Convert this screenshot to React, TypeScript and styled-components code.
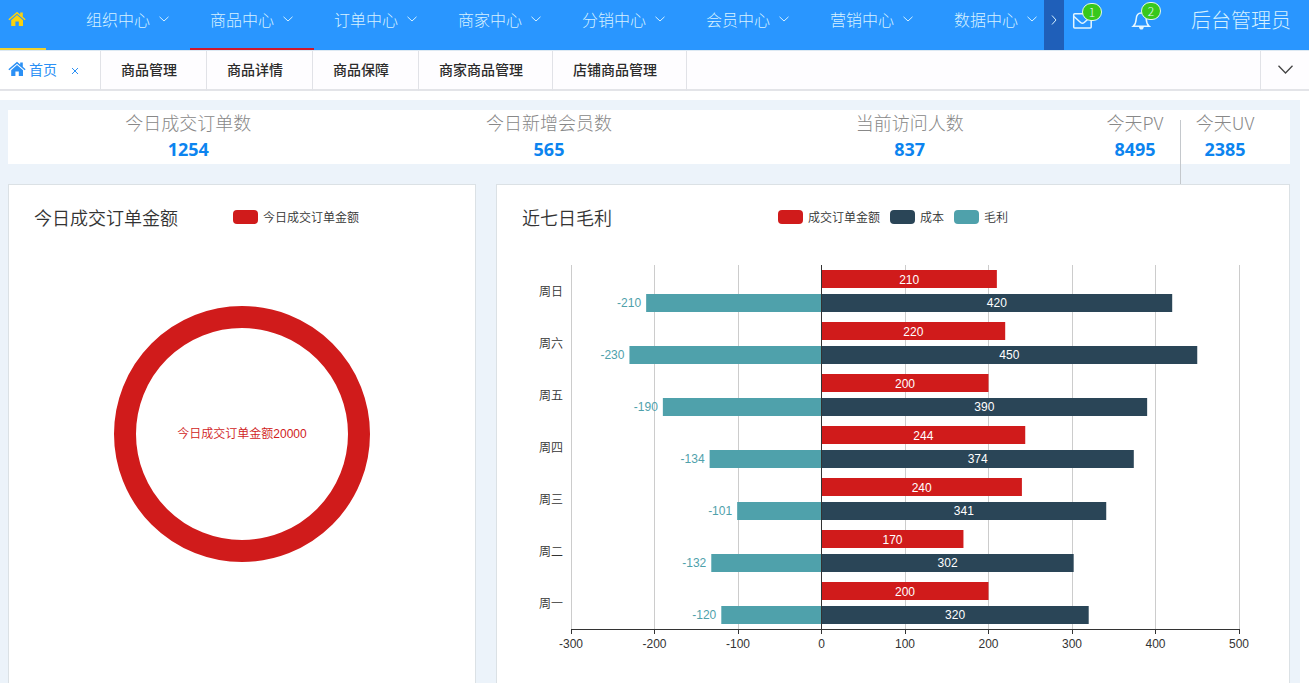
import React from 'react';
import styled, { createGlobalStyle } from 'styled-components';

const cjk = `'Noto Sans CJK SC', sans-serif`;
const chartFont = `'Liberation Sans', 'Noto Sans CJK SC', sans-serif`;

const RED = '#d01b1b';
const NAVY = '#2a4557';
const TEAL = '#4fa1ab';

const GlobalStyle = createGlobalStyle`
  * { box-sizing: border-box; }
  body { margin: 0; background: #fff; font-family: ${cjk}; }
  button { border: 0; padding: 0; background: none; font: inherit; cursor: pointer; }
  a { color: inherit; text-decoration: none; }
  svg { display: block; flex: none; }
`;

const Page = styled.div`
  display: flex;
  flex-direction: column;
  min-height: 100vh;
`;

const Header = styled.header`
  display: flex;
  height: 50px;
  background: #2996ff;
  color: #d6f1ff;
`;

const Nav = styled.nav`
  display: flex;
  flex: 1;
  gap: 20px;
  min-width: 0;
  overflow: hidden;
`;

const HomeLink = styled.a`
  flex: none;
  width: 46px;
  padding: 11px 8px 0;
  border-bottom: 2px solid #f0d02c;
  color: #fbd20d;
`;

const MenuList = styled.div`
  display: flex;
`;

const MenuItem = styled.a<{ $current?: boolean }>`
  display: flex;
  align-items: center;
  gap: 9px;
  flex: none;
  width: 124px;
  padding: 0 20px 10px;
  border-bottom: 2px solid ${(p) => (p.$current ? '#d0182c' : 'transparent')};
  font-size: 16px;
  font-weight: 300;
  white-space: nowrap;
`;

const MoreButton = styled.button`
  display: flex;
  justify-content: center;
  flex: none;
  width: 20px;
  padding-top: 14px;
  background: #1f5fb9;
  color: inherit;
`;

const Tools = styled.div`
  display: flex;
  flex: none;
  align-items: center;
  width: 245px;
  padding: 0 18px 10px 8px;
`;

const ToolButton = styled.button`
  position: relative;
  display: flex;
  flex: none;
  width: 59px;
  color: #e4f6ff;
`;

const Badge = styled.span`
  position: absolute;
  top: -8px;
  left: 10px;
  width: 20px;
  height: 18px;
  border: 1px solid #e6fbe9;
  border-radius: 10px;
  background: #38c81c;
  font-size: 12px;
  font-weight: 300;
  line-height: 16px;
  text-align: center;
`;

const UserName = styled.a`
  margin-left: auto;
  font-size: 20px;
  font-weight: 300;
  line-height: 38px;
  white-space: nowrap;
`;

const TabBar = styled.div`
  display: flex;
  height: 41px;
  border-top: 1px solid #dde9f3;
  background: #fefdff;
  box-shadow: inset 0 -2px #e3e4e8;
`;

const TabLink = styled.a`
  flex: none;
  padding: 0 29px 0 20px;
  border-right: 1px solid #e1e2e7;
  color: #2b2b2b;
  font-size: 14px;
  font-weight: 500;
  line-height: 36px;
`;

const ActiveTab = styled.div`
  display: flex;
  align-items: center;
  flex: none;
  width: 101px;
  height: 39px;
  padding: 0 19px 2px 8px;
  border-right: 1px solid #e1e2e7;
  border-bottom: 1px solid #e1e2e7;
  background: #fff;
  color: #2b90f5;
  font-size: 14px;
`;

const ActiveTabLink = styled.a`
  display: flex;
  align-items: center;
  gap: 3px;
`;

const CloseButton = styled.button`
  margin: 4px 0 0 auto;
  padding: 2px;
  color: #2b90f5;
`;

const TabsMenu = styled.button`
  display: flex;
  justify-content: center;
  align-items: center;
  flex: none;
  width: 49px;
  margin-left: auto;
  padding-bottom: 4px;
  border-left: 1px solid #e1e2e7;
  color: #444;
`;

const Main = styled.main`
  display: flex;
  flex: 1;
  flex-direction: column;
  gap: 20px;
  margin: 9px 9px 0 0;
  padding: 10px 10px 0 8px;
  background: #ecf3fa;
`;

const Stats = styled.section`
  display: flex;
  height: 54px;
  padding-right: 20px;
  background: #fff;
`;

const Stat = styled.div<{ $narrow?: boolean }>`
  position: relative;
  flex: ${(p) => (p.$narrow ? '0 0 90px' : '1 1 0')};
  text-align: center;
  white-space: nowrap;
`;

const StatDivider = styled.span`
  position: absolute;
  top: 10px;
  right: -1px;
  width: 1px;
  height: 64px;
  background: #c4c8cc;
`;

const StatLabel = styled.div`
  color: #888;
  font-size: 18px;
  font-weight: 300;
  line-height: 24px;
`;

const StatValue = styled.div`
  color: #0c84ef;
  font-family: 'Noto Sans', sans-serif;
  font-size: 18px;
  font-weight: 700;
  line-height: 30px;
`;

const Cards = styled.div`
  display: grid;
  flex: 1;
  grid-template-columns: 468fr 794fr;
  gap: 20px;
`;

const Card = styled.section`
  min-width: 0;
  padding: 20px 25px 0;
  border: 1px solid #dbe1e5;
  border-bottom: 0;
  background: #fff;
`;

const CardHead = styled.div<{ $inline?: boolean }>`
  display: grid;
  grid-template-columns: ${(p) => (p.$inline ? 'auto 1fr' : '1fr auto 1fr')};
  column-gap: ${(p) => (p.$inline ? '55px' : '0')};
  align-items: start;
  height: 60px;
`;

const CardTitle = styled.h2`
  margin: 0;
  color: #333;
  font-size: 18px;
  font-weight: 350;
  line-height: 24px;
  white-space: nowrap;
`;

const Legend = styled.div`
  display: flex;
  gap: 10px;
`;

const LegendItem = styled.span`
  display: flex;
  align-items: center;
  gap: 5px;
  color: #333;
  font-size: 12px;
  font-weight: 350;
  line-height: 24px;
  white-space: nowrap;
`;

const Swatch = styled.i<{ $color: string }>`
  width: 25px;
  height: 14px;
  border-radius: 4px;
  background: ${(p) => p.$color};
`;

const DonutBox = styled.div`
  display: flex;
  justify-content: center;
  padding-top: 41px;
`;

const PlotBox = styled.div`
  margin: 0 25px 0 49px;
`;

const ChartSvg = styled.svg`
  overflow: visible;
  font-family: ${chartFont};
  font-size: 12px;
`;

const ChartLabel = styled.text`
  font-weight: 350;
`;

const HomeIcon = () => (
  <svg width="18" height="16" viewBox="0 0 18 16" fill="currentColor" aria-hidden="true">
    <path d="M9 4 15 9.200V15h-4.200v-4.400H7.400V15H3.200V9.200z" />
    <path d="M.4 8.200 9 .8l3.200 2.700V1.500h2.600v4.200l2.800 2.500-.9 1L9 2.800 1.300 9.200z" />
  </svg>
);

const Chevron = ({ w, h, width = 1 }: { w: number; h: number; width?: number }) => (
  <svg width={w} height={h} viewBox={`0 0 ${w} ${h}`} fill="none" stroke="currentColor" strokeWidth={width} aria-hidden="true">
    <path d={`M.5 .8 ${w / 2} ${h - 1} ${w - 0.5} .8`} />
  </svg>
);

const menus = ['组织中心', '商品中心', '订单中心', '商家中心', '分销中心', '会员中心', '营销中心', '数据中心'];
const tabs = ['商品管理', '商品详情', '商品保障', '商家商品管理', '店铺商品管理'];

const stats = [
  { label: '今日成交订单数', value: 1254 },
  { label: '今日新增会员数', value: 565 },
  { label: '当前访问人数', value: 837 },
  { label: '今天PV', value: 8495, narrow: true, divider: true },
  { label: '今天UV', value: 2385, narrow: true },
];

const days = [
  { name: '周日', amount: 210, cost: 420, profit: -210 },
  { name: '周六', amount: 220, cost: 450, profit: -230 },
  { name: '周五', amount: 200, cost: 390, profit: -190 },
  { name: '周四', amount: 244, cost: 374, profit: -134 },
  { name: '周三', amount: 240, cost: 341, profit: -101 },
  { name: '周二', amount: 170, cost: 302, profit: -132 },
  { name: '周一', amount: 200, cost: 320, profit: -120 },
];

const MIN = -300;
const MAX = 500;
const ROW = 52;
const BAR = 18;
const PLOT_HEIGHT = ROW * days.length;
const ticks = [-300, -200, -100, 0, 100, 200, 300, 400, 500];
const at = (v: number) => `${((v - MIN) / (MAX - MIN)) * 100}%`;
const span = (v: number) => `${(Math.abs(v) / (MAX - MIN)) * 100}%`;

const Donut = () => (
  <ChartSvg width="256" height="256" viewBox="0 0 256 256" role="img" aria-label="今日成交订单金额">
    <circle cx="128" cy="128" r="117" fill="none" stroke={RED} strokeWidth="22" />
    <ChartLabel x="128" y="132" textAnchor="middle" fill={RED}>今日成交订单金额20000</ChartLabel>
  </ChartSvg>
);

const ProfitChart = () => (
  <ChartSvg width="100%" height={PLOT_HEIGHT + 24} role="img" aria-label="近七日毛利">
    {ticks.map((t) => (
      <g key={t}>
        <line x1={at(t)} x2={at(t)} y1="0" y2={PLOT_HEIGHT} stroke="#ccc" shapeRendering="crispEdges" />
        <line x1={at(t)} x2={at(t)} y1={PLOT_HEIGHT} y2={PLOT_HEIGHT + 5} stroke="#333" shapeRendering="crispEdges" />
        <text x={at(t)} y={PLOT_HEIGHT + 19} textAnchor="middle" fill="#333">{t}</text>
      </g>
    ))}
    {days.map((d, i) => {
      const top = i * ROW + 5;
      const low = top + 24;
      return (
        <g key={d.name}>
          <ChartLabel x="0" dx="-8" y={top + 26} textAnchor="end" fill="#333">{d.name}</ChartLabel>
          <rect x={at(0)} y={top} width={span(d.amount)} height={BAR} fill={RED} />
          <rect x={at(0)} y={low} width={span(d.cost)} height={BAR} fill={NAVY} />
          <rect x={at(d.profit)} y={low} width={span(d.profit)} height={BAR} fill={TEAL} />
          <text x={at(d.amount / 2)} y={top + 14} textAnchor="middle" fill="#fff">{d.amount}</text>
          <text x={at(d.cost / 2)} y={low + 13} textAnchor="middle" fill="#fff">{d.cost}</text>
          <text x={at(d.profit)} dx="-5" y={low + 13} textAnchor="end" fill={TEAL}>{d.profit}</text>
        </g>
      );
    })}
    <line x1={at(0)} x2={at(0)} y1="0" y2={PLOT_HEIGHT} stroke="#333" shapeRendering="crispEdges" />
    <line x1="0" x2="100%" y1={PLOT_HEIGHT} y2={PLOT_HEIGHT} stroke="#333" shapeRendering="crispEdges" />
  </ChartSvg>
);

export default function App() {
  return (
    <Page>
      <GlobalStyle />
      <Header>
        <Nav>
          <HomeLink href="#" aria-label="首页"><HomeIcon /></HomeLink>
          <MenuList>
            {menus.map((m) => (
              <MenuItem key={m} href="#" $current={m === '商品中心'}>
                {m}
                <Chevron w={10} h={6} />
              </MenuItem>
            ))}
          </MenuList>
        </Nav>
        <MoreButton aria-label="更多">
          <svg width="6" height="12" viewBox="0 0 6 12" fill="none" stroke="currentColor" aria-hidden="true">
            <path d="M1 1.500 5 6 1 10.500" />
          </svg>
        </MoreButton>
        <Tools>
          <ToolButton aria-label="消息">
            <svg width="20" height="18" viewBox="0 0 20 18" fill="none" stroke="currentColor" strokeWidth="1.500" aria-hidden="true">
              <rect x="1.700" y="2.700" width="17.500" height="14.300" rx="1" />
              <path d="M2 5.500 8.600 11.500c1.100 1 2.500 1 3.600 0L19 5.500" />
            </svg>
            <Badge>1</Badge>
          </ToolButton>
          <ToolButton aria-label="通知">
            <svg width="20" height="20" viewBox="0 0 20 20" fill="none" stroke="currentColor" strokeWidth="1.500" aria-hidden="true">
              <path d="M2.200 16.300c2.200-1.900 2.800-3.600 3-7.300C5.400 5.200 7 3 10.200 3s4.800 2.200 5 6c.2 3.700.8 5.400 3 7.300z" />
              <path d="M8 17h4.800c-.2 1.700-1.100 2.600-2.400 2.600S8.200 18.700 8 17z" fill="currentColor" stroke="none" />
            </svg>
            <Badge>2</Badge>
          </ToolButton>
          <UserName href="#">后台管理员</UserName>
        </Tools>
      </Header>
      <TabBar>
        <ActiveTab>
          <ActiveTabLink href="#"><HomeIcon />首页</ActiveTabLink>
          <CloseButton aria-label="关闭">
            <svg width="8" height="8" viewBox="0 0 8 8" stroke="currentColor" aria-hidden="true">
              <path d="M1 1 7 7M7 1 1 7" />
            </svg>
          </CloseButton>
        </ActiveTab>
        {tabs.map((t) => <TabLink key={t} href="#">{t}</TabLink>)}
        <TabsMenu aria-label="标签操作"><Chevron w={15} h={9} width={1.3} /></TabsMenu>
      </TabBar>
      <Main>
        <Stats>
          {stats.map((s) => (
            <Stat key={s.label} $narrow={s.narrow}>
              <StatLabel>{s.label}</StatLabel>
              <StatValue>{s.value}</StatValue>
              {s.divider && <StatDivider />}
            </Stat>
          ))}
        </Stats>
        <Cards>
          <Card>
            <CardHead $inline>
              <CardTitle>今日成交订单金额</CardTitle>
              <Legend>
                <LegendItem><Swatch $color={RED} />今日成交订单金额</LegendItem>
              </Legend>
            </CardHead>
            <DonutBox><Donut /></DonutBox>
          </Card>
          <Card>
            <CardHead>
              <CardTitle>近七日毛利</CardTitle>
              <Legend>
                <LegendItem><Swatch $color={RED} />成交订单金额</LegendItem>
                <LegendItem><Swatch $color={NAVY} />成本</LegendItem>
                <LegendItem><Swatch $color={TEAL} />毛利</LegendItem>
              </Legend>
            </CardHead>
            <PlotBox><ProfitChart /></PlotBox>
          </Card>
        </Cards>
      </Main>
    </Page>
  );
}
